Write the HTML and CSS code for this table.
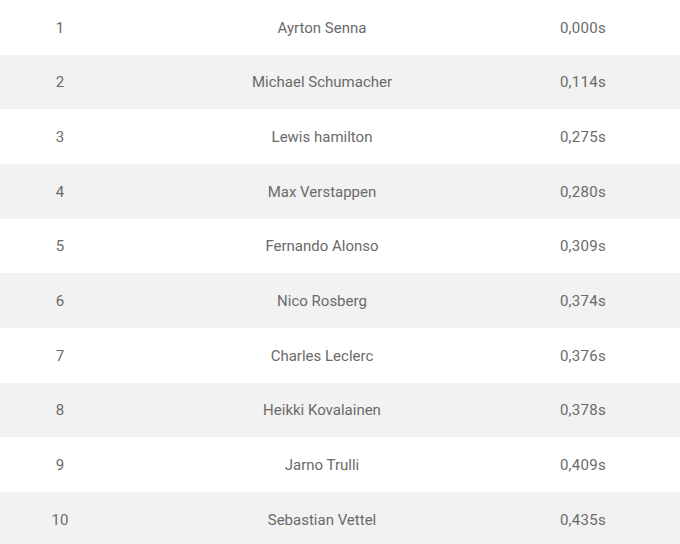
FILE: index.html
```html
<!DOCTYPE html>
<html>
<head>
<meta charset="utf-8">
<link rel="stylesheet" href="styles.css">
</head>
<body>
<div class="table">
  <div class="row"><span class="pos">1</span><span class="name">Ayrton Senna</span><span class="time">0,000s</span></div>
  <div class="row"><span class="pos">2</span><span class="name">Michael Schumacher</span><span class="time">0,114s</span></div>
  <div class="row"><span class="pos">3</span><span class="name">Lewis hamilton</span><span class="time">0,275s</span></div>
  <div class="row"><span class="pos">4</span><span class="name">Max Verstappen</span><span class="time">0,280s</span></div>
  <div class="row"><span class="pos">5</span><span class="name">Fernando Alonso</span><span class="time">0,309s</span></div>
  <div class="row"><span class="pos">6</span><span class="name">Nico Rosberg</span><span class="time">0,374s</span></div>
  <div class="row"><span class="pos">7</span><span class="name">Charles Leclerc</span><span class="time">0,376s</span></div>
  <div class="row"><span class="pos">8</span><span class="name">Heikki Kovalainen</span><span class="time">0,378s</span></div>
  <div class="row"><span class="pos">9</span><span class="name">Jarno Trulli</span><span class="time">0,409s</span></div>
  <div class="row"><span class="pos">10</span><span class="name">Sebastian Vettel</span><span class="time">0,435s</span></div>
</div>
</body>
</html>
```
FILE: styles.css
```css
html, body {
  margin: 0;
  padding: 0;
  background: #ffffff;
}
body {
  font-family: Roboto, "Liberation Sans", sans-serif;
  font-size: 15px;
  font-weight: 400;
  color: #6a6a6a;
}
.table {
  display: flex;
  flex-direction: column;
}
.row {
  display: grid;
  grid-template-columns: 120px 404px 118px 1fr;
  align-items: center;
  height: 54.67px;
}
.row:nth-child(even) {
  background: #f2f2f2;
}
.row span {
  text-align: center;
  line-height: 20px;
  padding-top: 1px;
}
.time {
  letter-spacing: 0.3px;
}
```
